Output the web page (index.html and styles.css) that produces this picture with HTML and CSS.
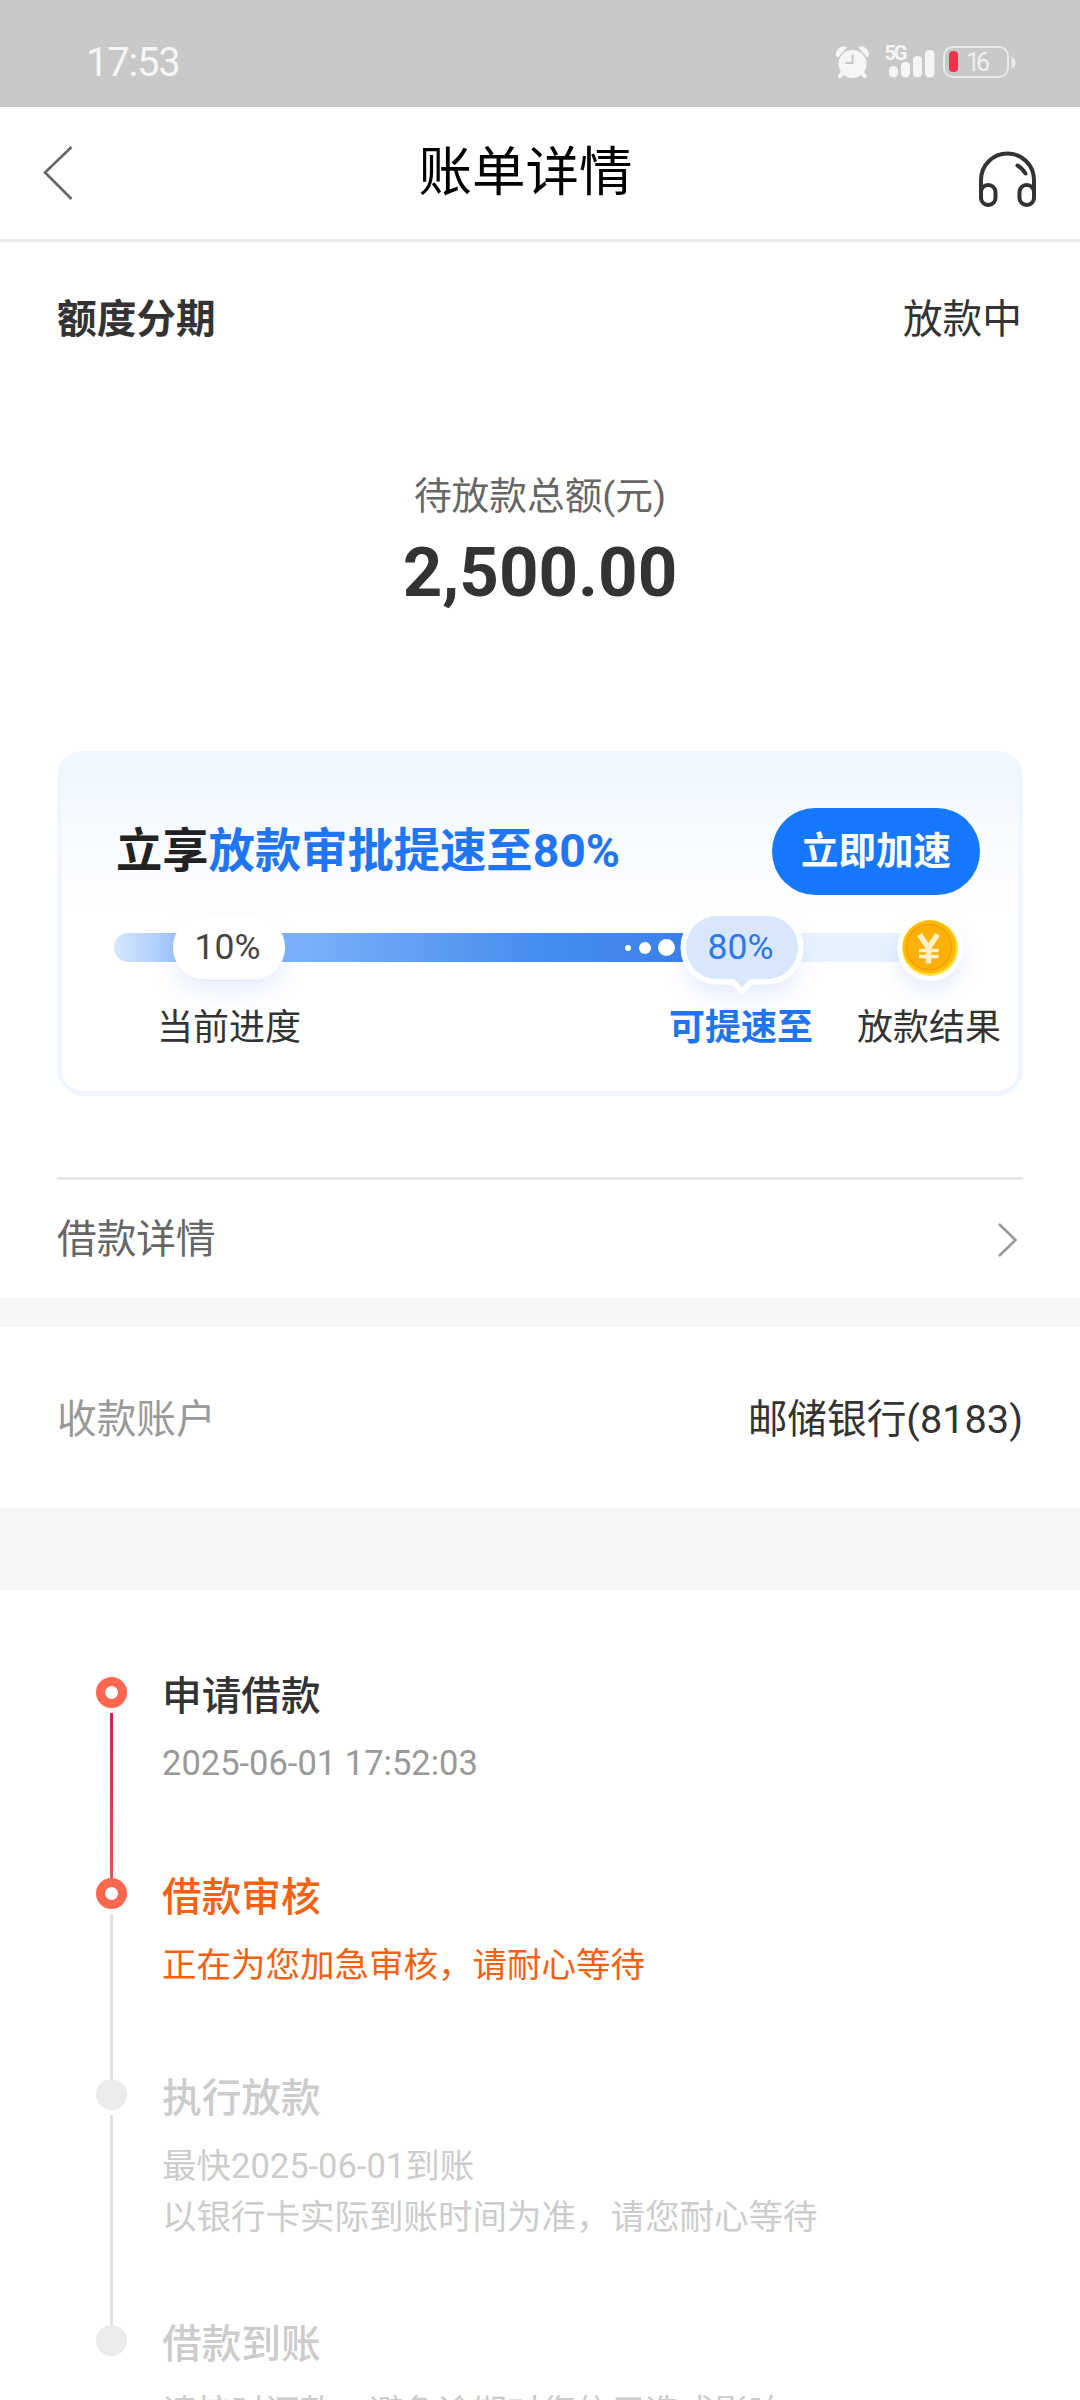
FILE: index.html
```html
<!DOCTYPE html>
<html lang="zh-CN">
<head>
<meta charset="utf-8">
<title>账单详情</title>
<link rel="stylesheet" href="styles.css">
</head>
<body>
<div class="screen">
  <div class="status">
    <span class="clock">17:53</span>
    <svg class="status-icons" width="184" height="40" viewBox="0 0 184 40">
      <g fill="#f5f5f5">
        <circle cx="17.500" cy="20" r="14"/>
        <path d="M1 11a8 8 0 0 1 11-8L3 13.500a4 4 0 0 1-2-2.500zM34 11a8 8 0 0 0-11-8l9 10.500a4 4 0 0 0 2-2.500z"/>
      </g>
      <path d="M8 29l-3 3M27 29l3 3" stroke="#f5f5f5" stroke-width="4" stroke-linecap="round"/>
      <path d="M17.500 10.500v8.500H10.500" fill="none" stroke="#c8c8c8" stroke-width="2"/>
      <text class="net" x="49.500" y="16" textLength="23">5G</text>
      <g fill="#f5f5f5">
        <rect x="54" y="22" width="9" height="11.500" rx="4.500"/>
        <rect x="66" y="18" width="9" height="15.500" rx="4.200"/>
        <rect x="78" y="12" width="9" height="21.500" rx="4.200"/>
        <rect x="90" y="6" width="9.500" height="27.500" rx="4.200"/>
      </g>
      <rect x="109" y="3" width="64" height="30" rx="9" fill="none" stroke="#e9e9e9" stroke-width="2"/>
      <rect x="114" y="7" width="9" height="21" rx="4" fill="#f0324b"/>
      <path d="M176.500 12q4 2 4 6.500t-4 6.500z" fill="#e9e9e9"/>
      <text class="charge" x="131" y="27" textLength="24">16</text>
    </svg>
  </div>
  <div class="navbar">
    <svg width="30" height="54" viewBox="0 0 30 54"><path d="M28.500 1L2 26.500L28.500 53" fill="none" stroke="#666" stroke-width="2.600"/></svg>
    <h1>账单详情</h1>
    <svg class="service" width="60" height="58" viewBox="0 0 60 58" fill="none" stroke="#333" stroke-width="4" stroke-linecap="round">
      <path d="M3 47V29a26.500 26.500 0 0 1 53 0V47"/>
      <rect x="3" y="34" width="14.500" height="20" rx="7"/>
      <rect x="41.500" y="34" width="14.500" height="20" rx="7"/>
      <path d="M39.500 14.500q4.500 2.500 8 8"/>
    </svg>
  </div>

  <section class="summary">
    <div class="row head"><b>额度分期</b><span>放款中</span></div>
    <div class="total-label">待放款总额(元)</div>
    <div class="total">2,500.00</div>
    <div class="card">
      <div class="card-head">
        <div class="promo">立享<em>放款审批提速至80%</em></div>
        <div class="button">立即加速</div>
      </div>
      <div class="progress">
        <div class="track"><div class="fill"><i class="d1"></i><i class="d2"></i><i class="d3"></i></div></div>
        <div class="pill now">10%</div>
        <div class="pill goal">80%
          <svg class="tip" width="30" height="18" viewBox="0 0 30 18"><path d="M0 5.500H5L15 17L25 5.500H30L22 0H8z" fill="#fff"/><path d="M5 0Q8 0 10 3L15 9L20 3Q22 0 25 0z" fill="#d9e7fe"/></svg>
        </div>
        <svg class="coin" width="66" height="66" viewBox="0 0 66 66">
          <circle cx="33" cy="33" r="33" fill="#fff"/>
          <circle cx="33" cy="33" r="28" fill="#ffdf35"/>
          <circle cx="32.500" cy="32" r="26.500" fill="#fdba0a"/>
          <circle cx="32" cy="32" r="22.500" fill="#fdb108" stroke="#f39e08" stroke-width="1.500"/>
          <path d="M22.500 19.500L31.500 33L40.500 19.500M31.500 31V48.500" fill="none" stroke="#fff1c8" stroke-width="5.500"/>
          <path d="M22 35.500H41.500M22 41.500H41.500" fill="none" stroke="#fff1c8" stroke-width="3.500"/>
        </svg>
      </div>
      <div class="labels"><span class="l1">当前进度</span><span class="l2">可提速至</span><span class="l3">放款结果</span></div>
    </div>
    <div class="row detail"><span>借款详情</span>
      <svg width="24" height="36" viewBox="0 0 24 36"><path d="M2 2L18.500 18L2 34" fill="none" stroke="#999" stroke-width="2.600"/></svg>
    </div>
  </section>

  <section class="row account"><span class="muted">收款账户</span><span>邮储银行(8183)</span></section>

  <section class="timeline">
    <div class="step done">
      <div class="rail"><i class="dot"></i><i class="line"></i></div>
      <div><h2>申请借款</h2><p>2025-06-01 17:52:03</p></div>
    </div>
    <div class="step active">
      <div class="rail"><i class="dot"></i><i class="line"></i></div>
      <div><h2>借款审核</h2><p>正在为您加急审核，请耐心等待</p></div>
    </div>
    <div class="step pending tall">
      <div class="rail"><i class="dot"></i><i class="line"></i></div>
      <div><h2>执行放款</h2><p>最快2025-06-01到账<br>以银行卡实际到账时间为准，请您耐心等待</p></div>
    </div>
    <div class="step pending">
      <div class="rail"><i class="dot"></i></div>
      <div><h2>借款到账</h2><p>请按时还款，避免逾期对您信用造成影响</p></div>
    </div>
  </section>
</div>
</body>
</html>
```
FILE: styles.css
```css
* { box-sizing: border-box; }
body, h1, h2, p { margin: 0; }
i, em { font-style: normal; }
svg { display: block; flex: none; }

.screen {
  width: 1080px;
  height: 2400px;
  overflow: hidden;
  background: #f6f6f9;
  color: #333;
  font: 400 39.700px/60px Roboto, "Noto Sans CJK SC", sans-serif;
}

.status {
  height: 107px;
  display: flex;
  justify-content: space-between;
  padding: 42px 61px 0 86px;
  background: #c8c8c8;
  color: #f5f5f5;
}
.clock { font-size: 40px; line-height: 42px; letter-spacing: -1.200px; }
.status-icons { margin-top: 2px; overflow: visible; }
.net { font: 700 20px Roboto, sans-serif; fill: #f5f5f5; }
.charge { font: 400 25px Roboto, sans-serif; fill: #f0f0f0; }

.navbar {
  height: 135px;
  display: flex;
  justify-content: space-between;
  align-items: flex-start;
  padding: 39px 42px 0 43px;
  background: #fff;
  border-bottom: 3px solid #eaeaea;
}
.navbar h1 { font-size: 53.500px; font-weight: 400; line-height: 54px; color: #000; }
.navbar .service { margin-top: 5px; }

.summary { height: 1056px; padding: 0 57px; background: #fff; }
.row { display: flex; justify-content: space-between; align-items: center; }
.head { padding: 48px 1px 0 0; }
.total-label { margin-top: 116px; text-align: center; font-size: 37.700px; color: #666; }
.total { margin-top: 7px; text-align: center; font-size: 69px; font-weight: 700; line-height: 80px; }

.card {
  height: 345px;
  margin-top: 138px;
  border: 5px solid #eff6ff;
  border-top-width: 0;
  border-radius: 26px;
  background: linear-gradient(#eef6ff, #f5faff 70px, #fff 160px);
}
.card-head { display: flex; justify-content: space-between; padding: 57px 38px 0 54px; }
.promo { font-size: 46.300px; font-weight: 700; line-height: 87px; color: #222; }
.promo em { color: #1f75f5; }
.button {
  width: 208px;
  height: 87px;
  border-radius: 44px;
  background: #1677ff;
  color: #fff;
  font-size: 37.500px;
  font-weight: 700;
  line-height: 86px;
  text-align: center;
}
.progress { position: relative; height: 63px; margin: 21px 52px 0; }
.track {
  position: absolute;
  left: 0;
  top: 17px;
  width: 810px;
  height: 29px;
  border-radius: 15px;
  background: #e7f2fe;
}
.fill {
  width: 600px;
  height: 29px;
  display: flex;
  align-items: center;
  justify-content: flex-end;
  padding-right: 39px;
  border-radius: 15px 0 0 15px;
  background: linear-gradient(90deg, #d6e6fe, #a0c6fb 60px, #7fb3fb 170px, #468eef 420px, #3a7ee8);
}
.fill i { border-radius: 50%; background: #fff; }
.d1 { width: 6px; height: 6px; margin-right: 8px; }
.d2 { width: 12px; height: 12px; margin-right: 7px; }
.d3 { width: 17px; height: 17px; }
.pill {
  position: absolute;
  top: 0;
  width: 112px;
  height: 63px;
  padding-right: 3px;
  border-radius: 31px;
  font-size: 35.500px;
  line-height: 63px;
  text-align: center;
  box-shadow: 0 12px 24px rgba(50, 110, 240, .12);
}
.now { left: 59px; background: #fff; color: #444; }
.goal { left: 572px; background: #d9e7fe; color: #2b76ee; box-shadow: 0 0 0 5.500px #fff, 0 14px 26px rgba(50, 110, 240, .16); }
.tip { position: absolute; left: 41px; top: 62.500px; }
.coin { position: absolute; left: 783px; top: -1px; border-radius: 50%; box-shadow: 0 10px 20px rgba(50, 110, 240, .13); }
.labels { display: flex; padding-top: 19px; padding-left: 95px; font-size: 36px; }
.l2 { margin-left: 368px; color: #1f75f0; font-weight: 700; }
.l3 { margin-left: 44px; }

.detail { height: 121px; margin-top: 81px; padding: 2px 2px 0 0; border-top: 3px solid #e8e8e8; color: #666; }

.account { height: 181px; margin-top: 29px; padding: 5px 57px 0; background: #fff; }
.muted { color: #999; }

.timeline { height: 810px; margin-top: 82px; padding: 87px 0 0 96px; background: #fff; }
.step { height: 201px; display: flex; gap: 35px; }
.tall { height: 246px; }
.rail { width: 31px; display: flex; flex-direction: column; align-items: center; gap: 5px; }
.dot { width: 31px; height: 31px; flex: none; border-radius: 50%; background: #ebebeb; }
.done .dot, .active .dot { border: 9px solid #ff6650; background: #fff; }
.line { width: 3px; flex: 1; background: #e2e2e2; }
.done .line { background: linear-gradient(#d02350, #e6544c); }
.step h2 { font-size: 39.700px; font-weight: 500; line-height: 39px; }
.step p { margin-top: 23px; font-size: 34.500px; line-height: 51px; color: #999; white-space: nowrap; }
.done p { margin-top: 22px; }
.active h2, .active p { color: #f6600f; }
.pending h2, .pending p { color: #ccc; }
```
